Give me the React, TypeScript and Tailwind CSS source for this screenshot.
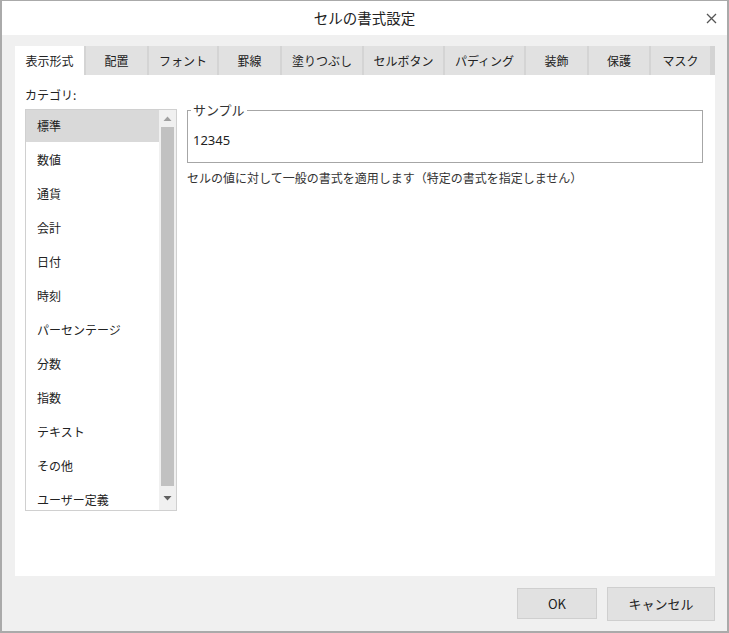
import React, { useState } from 'react'

const tabs = [
  { label: '表示形式', w: 'w-[69px]' },
  { label: '配置', w: 'w-[63px]' },
  { label: 'フォント', w: 'w-[70px]' },
  { label: '罫線', w: 'w-[63px]' },
  { label: '塗りつぶし', w: 'w-[82px]' },
  { label: 'セルボタン', w: 'w-[81px]' },
  { label: 'パディング', w: 'w-[81px]' },
  { label: '装飾', w: 'w-[63px]' },
  { label: '保護', w: 'w-[62px]' },
  { label: 'マスク', w: 'w-[61px]' }
]

const categories = [
  '標準',
  '数値',
  '通貨',
  '会計',
  '日付',
  '時刻',
  'パーセンテージ',
  '分数',
  '指数',
  'テキスト',
  'その他',
  'ユーザー定義'
]

export default function App() {
  const [activeTab, setActiveTab] = useState(0)
  const [selected, setSelected] = useState(0)

  return (
    <div
      className="w-[729px] h-[633px] box-border border-2 border-t border-[#aaaaaa] bg-[#f0f0f0] flex flex-col text-[12px] text-[#222]"
      style={{ fontFamily: '"Noto Sans CJK JP", "Noto Sans", sans-serif' }}
    >
      {/* Title bar */}
      <div className="h-[34px] bg-white relative flex items-center justify-center shrink-0">
        <span className="text-[14.5px] text-[#222] leading-none">セルの書式設定</span>
        <button className="absolute right-[10px] top-[11px] w-[12px] h-[12px] flex items-center justify-center">
          <svg width="11" height="11" viewBox="0 0 11 11">
            <path d="M1 1 L10 10 M10 1 L1 10" stroke="#555" strokeWidth="1.3" />
          </svg>
        </button>
      </div>

      {/* Body */}
      <div className="flex-1 flex flex-col pl-[13px] pr-[12px] pt-[11px]">
        {/* Tabs */}
        <div className="flex h-[29px] w-[700px]">
          {tabs.map((t, i) => (
            <button
              key={t.label}
              onClick={() => setActiveTab(i)}
              className={`${t.w} h-full flex items-center justify-center leading-none box-border ${
                i === activeTab ? 'bg-white' : 'bg-[#e1e1e1]'
              } ${i === 0 ? '' : 'border-l-2 border-[#d4d4d4]'}`}
            >
              {t.label}
            </button>
          ))}
          <div className="w-[5px] h-full bg-[#d3d3d3]" />
        </div>

        {/* Panel */}
        <div className="w-[700px] h-[501px] bg-white flex pl-[10px] pt-[12px]">
          <div className="w-[152px] flex flex-col">
            <div className="h-[16px] leading-[16px]">カテゴリ:</div>
            <div className="mt-[6px] h-[402px] border border-[#d0d0d0] flex overflow-hidden">
              <div className="w-[133px] flex flex-col overflow-hidden">
                {categories.map((c, i) => (
                  <div
                    key={c}
                    onClick={() => setSelected(i)}
                    className={`h-[32px] mb-[2px] shrink-0 flex items-center pl-[11px] ${
                      i === selected ? 'bg-[#d9d9d9]' : ''
                    }`}
                  >
                    {c}
                  </div>
                ))}
              </div>
              <div className="w-[17px] bg-[#f0f0f0] flex flex-col items-center">
                <div className="h-[17px] flex items-center justify-center">
                  <svg width="9" height="5" viewBox="0 0 9 5">
                    <path d="M0.5 5 L4.5 0.5 L8.5 5 Z" fill="#a0a0a0" />
                  </svg>
                </div>
                <div className="w-[13px] h-[359px] bg-[#c1c1c1]" />
                <div className="flex-1 flex items-center justify-center">
                  <svg width="9" height="5" viewBox="0 0 9 5">
                    <path d="M0.5 0 L4.5 4.5 L8.5 0 Z" fill="#606060" />
                  </svg>
                </div>
              </div>
            </div>
          </div>

          <div className="ml-[10px] w-[516px] flex flex-col pt-[23px]">
            <div className="relative h-[53px] border border-[#a6a6a6] flex items-center pl-[5px] pt-[7px]">
              <span className="absolute -top-[9px] left-[3px] px-[2px] bg-white leading-[16px] text-[13px] text-[#333]">
                サンプル
              </span>
              <span className="leading-none text-[13px]" style={{ fontFamily: '"Noto Sans", sans-serif' }}>12345</span>
            </div>
            <div className="mt-[7px] leading-[16px] text-[#333]">
              セルの値に対して一般の書式を適用します（特定の書式を指定しません）
            </div>
          </div>
        </div>

        {/* Buttons */}
        <div className="flex-1 flex items-center justify-end gap-[10px]">
          <button className="w-[80px] h-[31px] bg-[#e1e1e1] border border-[#cfcfcf] flex items-center justify-center leading-none text-[13px]">
            OK
          </button>
          <button className="w-[108px] h-[34px] bg-[#e1e1e1] border border-[#cfcfcf] flex items-center justify-center leading-none text-[13px]">
            キャンセル
          </button>
        </div>
      </div>
    </div>
  )
}
